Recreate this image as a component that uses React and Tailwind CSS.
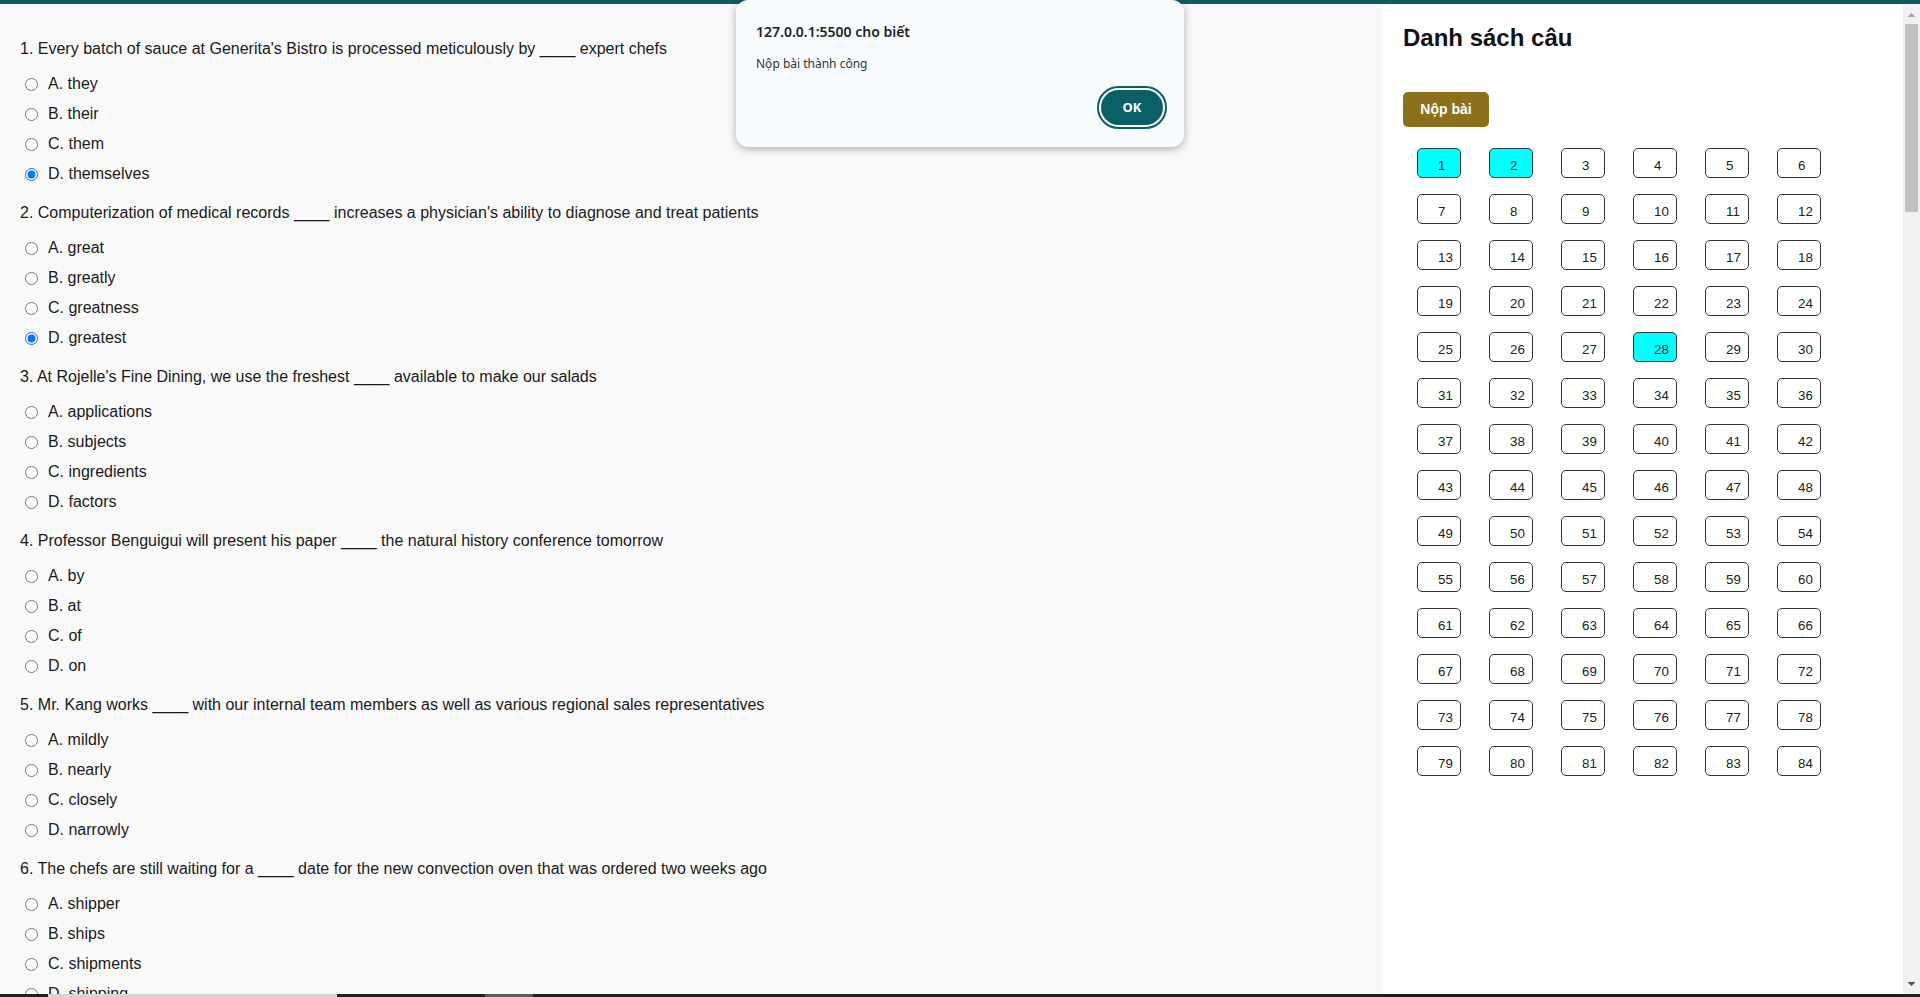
import React from 'react';

const questions = [
  {
    text: "Every batch of sauce at Generita's Bistro is processed meticulously by ____ expert chefs",
    options: ['they', 'their', 'them', 'themselves'],
    picked: 3,
  },
  {
    text: "Computerization of medical records ____ increases a physician's ability to diagnose and treat patients",
    options: ['great', 'greatly', 'greatness', 'greatest'],
    picked: 3,
  },
  {
    text: "At Rojelle's Fine Dining, we use the freshest ____ available to make our salads",
    options: ['applications', 'subjects', 'ingredients', 'factors'],
  },
  {
    text: 'Professor Benguigui will present his paper ____ the natural history conference tomorrow',
    options: ['by', 'at', 'of', 'on'],
  },
  {
    text: 'Mr. Kang works ____ with our internal team members as well as various regional sales representatives',
    options: ['mildly', 'nearly', 'closely', 'narrowly'],
  },
  {
    text: 'The chefs are still waiting for a ____ date for the new convection oven that was ordered two weeks ago',
    options: ['shipper', 'ships', 'shipments', 'shipping'],
  },
];

const letters = ['A', 'B', 'C', 'D'];
const done = [1, 2, 28];

function Question({ q, index }) {
  return (
    <div className="mb-[9px]">
      {/* Question text */}
      <p className="h-[30px] flex items-center text-[16px]">
        {index + 1}. {q.text}
      </p>
      <div className="mt-[5px]">
        {q.options.map((opt, i) => (
          <label key={i} className="h-[30px] flex items-center text-[16px]">
            <input
              type="radio"
              name={'q' + index}
              defaultChecked={q.picked === i}
              className="ml-[5px] w-[13px] h-[13px] accent-[#0075ff]"
            />
            <span className="ml-[10px]">
              {letters[i]}. {opt}
            </span>
          </label>
        ))}
      </div>
    </div>
  );
}

function App() {
  const numbers = Array.from({ length: 84 }, (_, i) => i + 1);

  return (
    <div className="relative h-screen w-full overflow-hidden flex flex-col bg-[#f9f9f9] text-[#1a1a1a] font-['Liberation_Sans',Arial,sans-serif]">
      {/* Top bar */}
      <div className="h-[4px] shrink-0 bg-[#0e5c63]"></div>

      <div className="flex flex-1 min-h-0">
        {/* Questions */}
        <main className="w-[1383px] shrink-0 overflow-hidden pl-[20px] pt-[30px]">
          {questions.map((q, i) => (
            <Question key={i} q={q} index={i} />
          ))}
        </main>

        {/* Sidebar */}
        <aside className="flex-1 bg-white rounded-tl-[8px] pl-[20px] pt-[20px]">
          <h2 className="text-[24px] leading-[28px] font-bold text-[#111]">Danh sách câu</h2>
          <button className="mt-[40px] w-[86px] h-[35px] rounded-[5px] bg-[#8c701c] text-white text-[14px] font-bold">
            Nộp bài
          </button>
          <div className="mt-[21px] ml-[14px] grid grid-cols-[repeat(6,44px)] gap-x-[28px] gap-y-[16px]">
            {numbers.map((n) => (
              <button
                key={n}
                className={
                  'w-[44px] h-[30px] border border-[#333] rounded-[5px] pl-[20px] pt-[5px] text-left text-[13.33px] text-[#222] ' +
                  (done.includes(n) ? 'bg-[#00ffff]' : 'bg-white')
                }
              >
                {n}
              </button>
            ))}
          </div>
        </aside>

        {/* Scrollbar */}
        <div className="w-[17px] shrink-0 bg-[#f1f1f1] flex flex-col items-center">
          <svg width="9" height="16" viewBox="0 0 9 16" className="mt-[2px]">
            <path d="M0.5 11 L4.5 7 L8.5 11 Z" fill="#a3a3a3" />
          </svg>
          <div className="mt-[2px] w-[13px] h-[188px] bg-[#c1c1c1]"></div>
          <div className="flex-1"></div>
          <svg width="9" height="16" viewBox="0 0 9 16" className="mb-[2px]">
            <path d="M0.5 6 L4.5 10 L8.5 6 Z" fill="#505050" />
          </svg>
        </div>
      </div>

      {/* Bottom strip */}
      <div className="h-[3px] shrink-0 flex bg-[#202020]">
        <div className="w-[48px]"></div>
        <div className="w-[289px] bg-[#d6d6d6]"></div>
        <div className="w-[148px]"></div>
        <div className="w-[48px] bg-[#5a5a5a]"></div>
      </div>

      {/* Alert dialog */}
      <div className="absolute left-[736px] top-0 w-[448px] h-[147px] rounded-[12px] bg-[#f7fbfd] shadow-[0_2px_8px_rgba(0,0,0,0.3)] px-[20px] pt-[22px] font-['Noto_Sans','Open_Sans',sans-serif]">
        <p className="text-[14px] leading-[20px] font-semibold text-[#1f1f1f]">127.0.0.1:5500 cho biết</p>
        <p className="mt-[13px] text-[12px] leading-[18px] text-[#333]">Nộp bài thành công</p>
        <div className="flex justify-end mt-[13px] mr-[-3px]">
          <span className="w-[70px] h-[43px] rounded-full border-2 border-[#0b5f66] bg-white p-[2px] flex">
            <button className="flex-1 rounded-full bg-[#0b5f66] text-white text-[13px] font-bold">OK</button>
          </span>
        </div>
      </div>
    </div>
  );
}

export default App;
